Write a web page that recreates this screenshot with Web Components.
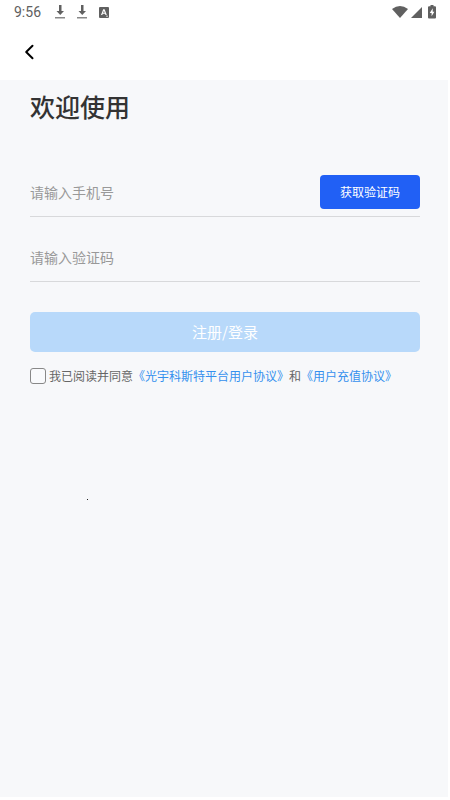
<!DOCTYPE html>
<html lang="zh-CN">
<head>
<meta charset="utf-8">
<meta name="viewport" content="width=device-width, initial-scale=1">
<title>欢迎使用</title>
<style>
  html, body { margin: 0; height: 100%; }
  body { background: #fff; color: #333; font-family: "Noto Sans CJK SC", sans-serif; }
</style>
</head>
<body>
<login-page></login-page>
<script>
const define = (name, html, init) => customElements.define(name, class extends HTMLElement {
  constructor() {
    super();
    this.attachShadow({ mode: 'open' }).innerHTML = html;
    if (init) init.call(this, this.shadowRoot);
  }
});

define('status-bar', `
<style>
  :host { display: flex; align-items: center; height: 24px; padding: 0 14px; color: #606060; font: 14px/24px Roboto, sans-serif; }
  time { margin-right: 14px; }
  svg { display: block; fill: currentColor; }
  .notes { display: flex; align-items: center; gap: 12px; flex: 1; }
  .system { display: flex; align-items: center; gap: 3px; }
  .battery { margin-left: 3px; }
</style>
<time>9:56</time>
<div class="notes">
  <svg width="10" height="14" viewBox="0 0 10 14"><path d="M4 0h2.500v6h2.500L5.250 10 1.500 6H4z"/><path d="M0 12h10v1.500H0z" opacity=".75"/></svg>
  <svg width="10" height="14" viewBox="0 0 10 14"><path d="M4 0h2.500v6h2.500L5.250 10 1.500 6H4z"/><path d="M0 12h10v1.500H0z" opacity=".75"/></svg>
  <svg width="10" height="11" viewBox="0 0 10 11"><path fill-rule="evenodd" d="M1 0h8q1 0 1 1v9q0 1-1 1H1q-1 0-1-1V1q0-1 1-1zM4.200 2.300 2 8h1.300l.4-1.200h2.400L6.500 8h1.300L5.600 2.300zM4.900 3.800l.8 2H4.100zM7 8.800h2v.8H7z"/></svg>
</div>
<div class="system">
  <svg width="16" height="12" viewBox="0 0 16 12"><path d="M0 3Q8-3 16 3L8 12z"/></svg>
  <svg width="11" height="11" viewBox="0 0 11 11"><path d="M11 0v11H0z"/></svg>
  <svg class="battery" width="8" height="14" viewBox="0 0 8 14"><path fill-rule="evenodd" d="M2.500 0h3v1.300H7q1 0 1 1V12.500q0 1-1 1H1q-1 0-1-1V2.300q0-1 1-1h1.500zM4.700 3.300 1.800 7.900h1.800v3.300l2.800-4.500H4.700z"/></svg>
</div>`);

define('nav-bar', `
<style>
  :host { display: flex; align-items: center; height: 56px; padding: 0 18px; }
  button { display: flex; padding: 4px 6px; border: 0; background: none; color: #000; cursor: pointer; }
  svg { display: block; }
</style>
<button type="button" aria-label="返回"><svg width="12" height="16" viewBox="0 0 12 16" fill="none" stroke="currentColor" stroke-width="2" stroke-linecap="round" stroke-linejoin="round"><path d="M8.500 1.800 2.200 8l6.300 6.200"/></svg></button>`);

define('text-field', `
<style>
  :host { display: flex; align-items: center; height: 48px; border-bottom: 1px solid #d8d9db; }
  input { flex: 1; min-width: 0; height: 32px; padding: 0; border: 0; outline: 0; background: none; color: #333; font: 14px/20px "Noto Sans CJK SC", sans-serif; }
  input::placeholder { color: #999; opacity: 1; }
</style>
<input type="text" inputmode="numeric"><slot></slot>`,
function (root) {
  const input = root.querySelector('input');
  input.placeholder = this.getAttribute('hint');
  input.setAttribute('aria-label', this.getAttribute('hint'));
});

define('code-button', `
<style>
  button { display: block; width: 100px; height: 34px; padding: 0; border: 0; border-radius: 4px; background: #2160f5; color: #fff; font: 12px/18px "Noto Sans CJK SC", sans-serif; cursor: pointer; }
</style>
<button type="button"><slot></slot></button>`);

define('submit-button', `
<style>
  :host { display: block; }
  button { display: block; width: 100%; height: 40px; padding: 0; border: 0; border-radius: 5px; background: #b8d9fa; color: #fff; font: 15px/22px "Noto Sans CJK SC", sans-serif; }
</style>
<button type="submit"><slot></slot></button>`);

define('agreement-row', `
<style>
  :host { display: flex; align-items: center; color: #666; font-size: 12px; line-height: 18px; }
  input { appearance: none; flex: none; width: 16px; height: 16px; margin: 0 3px 0 0; border: 1px solid #888; border-radius: 3px; background: #f9fafc; }
  input:checked { background: #3590ee; }
  a { color: #3590ee; text-decoration: none; }
</style>
<input type="checkbox" id="agree"><div><label for="agree">我已阅读并同意</label><a href="#terms">《光宇科斯特平台用户协议》</a>和<a href="#recharge">《用户充值协议》</a></div>`);

define('login-page', `
<style>
  :host { display: flex; flex-direction: column; min-height: 100vh; }
  main { position: relative; flex: 1; margin: 0 2px 3px 0; padding: 8px 28px 24px 30px; background: #f7f8fa; }
  h1 { margin: 0 0 44px; color: #333; font-size: 25px; line-height: 36px; font-weight: 500; }
  text-field + text-field { margin-top: 16px; }
  submit-button { margin: 30px 0 15px; }
  .speck { position: absolute; left: 87px; top: 419px; width: 1px; height: 1px; background: #222; }
</style>
<status-bar></status-bar>
<nav-bar></nav-bar>
<main>
  <h1>欢迎使用</h1>
  <text-field hint="请输入手机号"><code-button>获取验证码</code-button></text-field>
  <text-field hint="请输入验证码"></text-field>
  <submit-button>注册/登录</submit-button>
  <agreement-row></agreement-row>
  <span class="speck"></span>
</main>`);
</script>
</body>
</html>
